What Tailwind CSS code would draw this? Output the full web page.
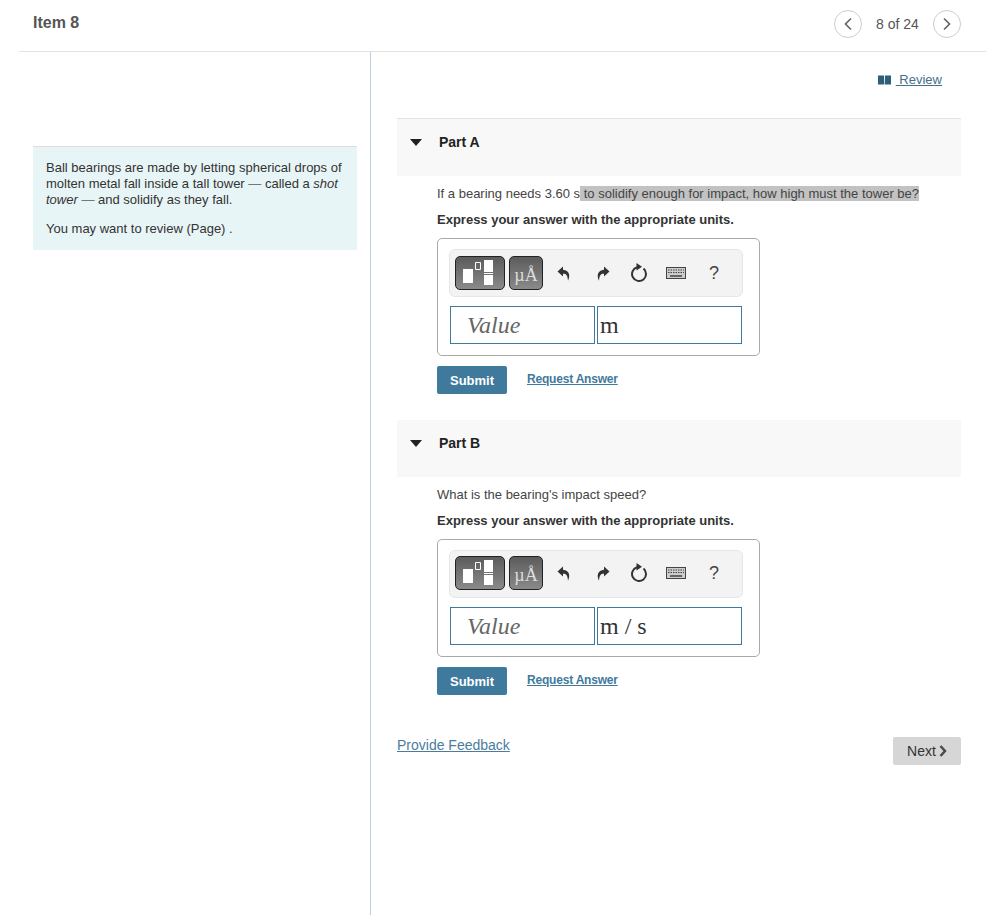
<!DOCTYPE html>
<html lang="en">
<head>
<meta charset="UTF-8">
<title>Item 8</title>
<script src="https://cdn.jsdelivr.net/npm/@tailwindcss/browser@4"></script>
</head>
<body class="bg-white h-[915px] overflow-hidden font-['Liberation_Sans',Arial,sans-serif] text-[#333]">
  <!-- Header -->
  <header class="ml-[19px] mr-[7px] h-[52px] border-b border-[#e2e2e2] flex items-start justify-between pl-[14px] pr-[25px]">
    <h1 class="text-base font-bold text-[#555] leading-[18px] mt-[14px]">Item 8</h1>
    <div class="flex items-center mt-[10px]">
      <button class="w-[28px] h-[28px] rounded-full border border-[#ccc] flex items-center justify-center">
        <svg width="10" height="14" viewBox="0 0 10 14" fill="none" stroke="#666" stroke-width="1.7"><path d="M8 1.500 2.500 7 8 12.500"/></svg>
      </button>
      <span class="text-sm text-[#555] w-[71px] text-center">8 of 24</span>
      <button class="w-[28px] h-[28px] rounded-full border border-[#ccc] flex items-center justify-center">
        <svg width="10" height="14" viewBox="0 0 10 14" fill="none" stroke="#666" stroke-width="1.7"><path d="M2 1.500 7.500 7 2 12.500"/></svg>
      </button>
    </div>
  </header>

  <div class="flex h-[863px]">
    <!-- Intro -->
    <aside class="w-[371px] shrink-0 border-r border-[#bcd0de] pl-[33px] pr-[13px] pt-[94px]">
      <div class="bg-[#e8f5f6] border-t border-[#dcdfe0] pl-[13px] pr-[8px] pt-[13px] h-[104px] text-[13px] leading-[16px] text-[#333]">
        <p>Ball bearings are made by letting spherical drops of molten metal fall inside a tall tower <span class="text-[#777]">&mdash;</span> called a <em>shot tower</em> <span class="text-[#777]">&mdash;</span> and solidify as they fall.</p>
        <p class="mt-[13px]">You may want to review (Page) .</p>
      </div>
    </aside>

    <!-- Main -->
    <main class="flex-1 pl-[26px] pr-[32px]">
      <div class="flex justify-end pr-[19px] pt-[20px] h-[66px]">
        <svg class="mr-[5px] mt-[3px]" width="13" height="10" viewBox="0 0 13 10" fill="#2f5d7c"><path d="M0 .5h6l.2 9H0zM7 .5h6v9H6.800z"/></svg>
        <a href="#" class="text-[13px] leading-[16px] h-[16px] text-[#466f8a] underline">&nbsp;Review</a>
      </div>

      <!-- Part A -->
      <section>
        <div class="h-[58px] bg-[#f8f8f8] border-t border-[#e2e2e2] flex items-start pl-[13px] pt-[15px]">
          <svg class="mt-[5px]" width="12" height="7" viewBox="0 0 12 7" fill="#222"><path d="M0 0h12L6 7z"/></svg>
          <h2 class="ml-[17px] text-sm font-bold text-[#222] leading-[16px]">Part A</h2>
        </div>
        <div class="pl-[40px] pt-[10px]">
          <p class="text-[13px] leading-[15px] text-[#444]">If a bearing needs 3.60 s<span class="bg-[#c2c2c2]"> to solidify enough for impact, how high must the tower be?</span></p>
          <p class="text-[13px] leading-[15px] font-bold text-[#333] mt-[11px]">Express your answer with the appropriate units.</p>
          <div class="w-[323px] h-[118px] mt-[11px] border border-[#aaa] rounded-[5px] pl-[11px] pt-[10px]">
            <div class="w-[294px] h-[48px] bg-[#f3f3f3] border border-[#e6e6e6] rounded-[6px] flex items-center pl-[5px]">
              <button class="w-[50px] h-[34px] rounded-[5px] border border-[#222] bg-gradient-to-b from-[#5c5c5c] to-[#8a8a8a] flex items-center justify-center">
                <svg width="40" height="26" viewBox="0 0 40 26"><path fill="#fff" d="M3 9h10v14H3zM24 0h9v12h-9zM24 13h9v1h-9zM24 15h9v10h-9z"/><path fill="none" stroke="#fff" d="M15.500 2.500h5v7h-5z"/></svg>
              </button>
              <button class="w-[34px] h-[34px] ml-[4px] rounded-[5px] border border-[#222] bg-gradient-to-b from-[#5c5c5c] to-[#8a8a8a] text-[#ddd] font-['Liberation_Serif',serif] text-[18px] leading-[34px] pt-[1px]">&micro;&Aring;</button>
              <svg class="ml-[13px]" width="16" height="17" viewBox="0 0 16 17" fill="#333"><path d="M7 1.500 1.500 6.500 7 11.500V8.800c3-.2 4.500 1 5 7 2.500-5 1.500-10.500-5-11z"/></svg>
              <svg class="ml-[23px]" width="16" height="17" viewBox="0 0 16 17" fill="#333"><path d="M9 1.500l5.500 5L9 11.500V8.800c-3-.2-4.500 1-5 7-2.500-5-1.500-10.500 5-11z"/></svg>
              <svg class="ml-[20px]" width="18" height="20" viewBox="0 0 18 20" fill="none" stroke="#333" stroke-width="2"><path d="M12.500 5.600A7 7 0 1 1 6 4.300"/><path fill="#333" stroke="none" d="M5.500 0l5.500 3.800-5.500 3.800z"/></svg>
              <svg class="ml-[17px]" width="20" height="12" viewBox="0 0 20 12" fill="none"><rect x=".5" y=".5" width="19" height="11" fill="#ccc" stroke="#444"/><path stroke="#444" stroke-dasharray="1.500 1" d="M2 3h16M2 5.500h16"/><path stroke="#444" stroke-width="1.500" d="M4 9h12"/></svg>
              <span class="ml-[23px] text-lg text-[#444] leading-none">?</span>
            </div>
            <div class="flex gap-[2px] mt-[9px] ml-[1px] font-['Liberation_Serif',serif]">
              <div class="w-[145px] h-[38px] border border-[#3f7a9c] pl-[16px] italic text-[24px] leading-[36px] text-[#666]">Value</div>
              <div class="w-[145px] h-[38px] border border-[#3f7a9c] pl-[2px] text-[24px] leading-[36px] text-[#333]">m</div>
            </div>
          </div>
          <div class="flex items-start mt-[10px]">
            <button class="w-[70px] h-[28px] pt-[1px] bg-[#3f7a9c] rounded-[2px] text-white text-[13px] font-bold">Submit</button>
            <a href="#" class="ml-[20px] mt-[6px] text-[12px] leading-[15px] font-bold tracking-[-0.2px] text-[#3f7a9c] underline">Request Answer</a>
          </div>
        </div>
      </section>

      <!-- Part B -->
      <section class="mt-[26px]">
        <div class="h-[57px] bg-[#f8f8f8] flex items-start pl-[13px] pt-[15px]">
          <svg class="mt-[5px]" width="12" height="7" viewBox="0 0 12 7" fill="#222"><path d="M0 0h12L6 7z"/></svg>
          <h2 class="ml-[17px] text-sm font-bold text-[#222] leading-[16px]">Part B</h2>
        </div>
        <div class="pl-[40px] pt-[10px]">
          <p class="text-[13px] leading-[15px] text-[#444]">What is the bearing's impact speed?</p>
          <p class="text-[13px] leading-[15px] font-bold text-[#333] mt-[11px]">Express your answer with the appropriate units.</p>
          <div class="w-[323px] h-[118px] mt-[11px] border border-[#aaa] rounded-[5px] pl-[11px] pt-[10px]">
            <div class="w-[294px] h-[48px] bg-[#f3f3f3] border border-[#e6e6e6] rounded-[6px] flex items-center pl-[5px] pb-[2px]">
              <button class="w-[50px] h-[34px] rounded-[5px] border border-[#222] bg-gradient-to-b from-[#5c5c5c] to-[#8a8a8a] flex items-center justify-center">
                <svg width="40" height="26" viewBox="0 0 40 26"><path fill="#fff" d="M3 9h10v14H3zM24 0h9v12h-9zM24 13h9v1h-9zM24 15h9v10h-9z"/><path fill="none" stroke="#fff" d="M15.500 2.500h5v7h-5z"/></svg>
              </button>
              <button class="w-[34px] h-[34px] ml-[4px] rounded-[5px] border border-[#222] bg-gradient-to-b from-[#5c5c5c] to-[#8a8a8a] text-[#ddd] font-['Liberation_Serif',serif] text-[18px] leading-[34px] pt-[1px]">&micro;&Aring;</button>
              <svg class="ml-[13px]" width="16" height="17" viewBox="0 0 16 17" fill="#333"><path d="M7 1.500 1.500 6.500 7 11.500V8.800c3-.2 4.500 1 5 7 2.500-5 1.500-10.500-5-11z"/></svg>
              <svg class="ml-[23px]" width="16" height="17" viewBox="0 0 16 17" fill="#333"><path d="M9 1.500l5.500 5L9 11.500V8.800c-3-.2-4.500 1-5 7-2.500-5-1.500-10.500 5-11z"/></svg>
              <svg class="ml-[20px]" width="18" height="20" viewBox="0 0 18 20" fill="none" stroke="#333" stroke-width="2"><path d="M12.500 5.600A7 7 0 1 1 6 4.300"/><path fill="#333" stroke="none" d="M5.500 0l5.500 3.800-5.500 3.800z"/></svg>
              <svg class="ml-[17px]" width="20" height="12" viewBox="0 0 20 12" fill="none"><rect x=".5" y=".5" width="19" height="11" fill="#ccc" stroke="#444"/><path stroke="#444" stroke-dasharray="1.500 1" d="M2 3h16M2 5.500h16"/><path stroke="#444" stroke-width="1.500" d="M4 9h12"/></svg>
              <span class="ml-[23px] text-lg text-[#444] leading-none">?</span>
            </div>
            <div class="flex gap-[2px] mt-[9px] ml-[1px] font-['Liberation_Serif',serif]">
              <div class="w-[145px] h-[38px] border border-[#3f7a9c] pl-[16px] italic text-[24px] leading-[36px] text-[#666]">Value</div>
              <div class="w-[145px] h-[38px] border border-[#3f7a9c] pl-[2px] text-[24px] leading-[36px] text-[#333]">m / s</div>
            </div>
          </div>
          <div class="flex items-start mt-[10px]">
            <button class="w-[70px] h-[28px] pt-[1px] bg-[#3f7a9c] rounded-[2px] text-white text-[13px] font-bold">Submit</button>
            <a href="#" class="ml-[20px] mt-[6px] text-[12px] leading-[15px] font-bold tracking-[-0.2px] text-[#3f7a9c] underline">Request Answer</a>
          </div>
        </div>
      </section>

      <!-- Footer -->
      <div class="flex items-start justify-between mt-[42px]">
        <a href="#" class="text-sm leading-[16px] text-[#4a7d9d] underline">Provide Feedback</a>
        <button class="w-[68px] h-[28px] bg-[#d6d6d6] rounded-[2px] text-sm text-[#333] flex items-center justify-center gap-[3px]">
          Next
          <svg width="8" height="12" viewBox="0 0 8 12" fill="none" stroke="#4a4a4a" stroke-width="2.500"><path d="M1.500 1 6 6l-4.500 5"/></svg>
        </button>
      </div>
    </main>
  </div>
</body>
</html>
